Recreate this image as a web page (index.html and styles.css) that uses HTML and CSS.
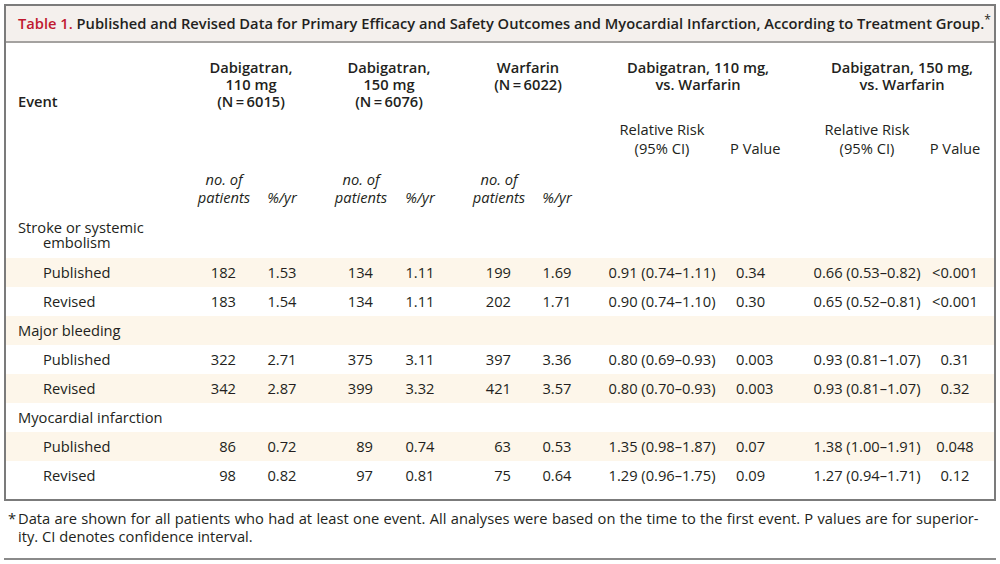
FILE: index.html
```html
<!DOCTYPE html>
<html lang="en">
<head>
<meta charset="utf-8">
<title>Table 1</title>
<link rel="stylesheet" href="styles.css">
</head>
<body>
<div class="page">
  <div class="box">
    <div class="title"><span class="lab">Table 1.</span> Published and Revised Data for Primary Efficacy and Safety Outcomes and Myocardial Infarction, According to Treatment Group.<sup>*</sup></div>
    <table class="data">
      <colgroup>
        <col class="w-ev"><col class="w-n1"><col class="w-p"><col class="w-n"><col class="w-p"><col class="w-n"><col class="w-p6"><col class="w-rr1"><col class="w-pv1"><col class="w-rr2"><col class="w-pv2">
      </colgroup>
      <thead>
        <tr class="r-group">
          <th class="ev">Event</th>
          <th colspan="2" class="g g1">Dabigatran,<br>110 mg<br>(N&#8201;=&#8201;6015)</th>
          <th colspan="2" class="g g2">Dabigatran,<br>150 mg<br>(N&#8201;=&#8201;6076)</th>
          <th colspan="2" class="g g3">Warfarin<br>(N&#8201;=&#8201;6022)</th>
          <th colspan="2" class="g g4">Dabigatran, 110 mg,<br>vs. Warfarin</th>
          <th colspan="2" class="g g5">Dabigatran, 150 mg,<br>vs. Warfarin</th>
        </tr>
        <tr class="r-sub">
          <td></td><td></td><td></td><td></td><td></td><td></td><td></td>
          <th class="rr1">Relative Risk<br>(95% CI)</th>
          <th class="pvh1">P Value</th>
          <th class="rr2">Relative Risk<br>(95% CI)</th>
          <th class="pv2">P Value</th>
        </tr>
        <tr class="r-unit">
          <td></td>
          <th class="nh1"><i>no. of<br>patients</i></th>
          <th class="ph"><i>%/yr</i></th>
          <th class="nh"><i>no. of<br>patients</i></th>
          <th class="ph"><i>%/yr</i></th>
          <th class="nh"><i>no. of<br>patients</i></th>
          <th class="ph"><i>%/yr</i></th>
          <td></td><td></td><td></td><td></td>
        </tr>
      </thead>
      <tbody>
        <tr class="cat first">
          <td class="ev hang">Stroke or systemic<br>embolism</td>
          <td></td><td></td><td></td><td></td><td></td><td></td><td></td><td></td><td></td><td></td>
        </tr>
        <tr class="row band">
          <td class="ev sub">Published</td>
          <td class="n1">182</td><td class="p">1.53</td>
          <td class="n">134</td><td class="p">1.11</td>
          <td class="n">199</td><td class="p">1.69</td>
          <td class="rr1">0.91 (0.74–1.11)</td><td class="pv1">0.34</td>
          <td class="rr2">0.66 (0.53–0.82)</td><td class="pv2">&lt;0.001</td>
        </tr>
        <tr class="row">
          <td class="ev sub">Revised</td>
          <td class="n1">183</td><td class="p">1.54</td>
          <td class="n">134</td><td class="p">1.11</td>
          <td class="n">202</td><td class="p">1.71</td>
          <td class="rr1">0.90 (0.74–1.10)</td><td class="pv1">0.30</td>
          <td class="rr2">0.65 (0.52–0.81)</td><td class="pv2">&lt;0.001</td>
        </tr>
        <tr class="row band">
          <td class="ev">Major bleeding</td>
          <td></td><td></td><td></td><td></td><td></td><td></td><td></td><td></td><td></td><td></td>
        </tr>
        <tr class="row">
          <td class="ev sub">Published</td>
          <td class="n1">322</td><td class="p">2.71</td>
          <td class="n">375</td><td class="p">3.11</td>
          <td class="n">397</td><td class="p">3.36</td>
          <td class="rr1">0.80 (0.69–0.93)</td><td class="pv1">0.003</td>
          <td class="rr2">0.93 (0.81–1.07)</td><td class="pv2">0.31</td>
        </tr>
        <tr class="row band">
          <td class="ev sub">Revised</td>
          <td class="n1">342</td><td class="p">2.87</td>
          <td class="n">399</td><td class="p">3.32</td>
          <td class="n">421</td><td class="p">3.57</td>
          <td class="rr1">0.80 (0.70–0.93)</td><td class="pv1">0.003</td>
          <td class="rr2">0.93 (0.81–1.07)</td><td class="pv2">0.32</td>
        </tr>
        <tr class="row">
          <td class="ev">Myocardial infarction</td>
          <td></td><td></td><td></td><td></td><td></td><td></td><td></td><td></td><td></td><td></td>
        </tr>
        <tr class="row band">
          <td class="ev sub">Published</td>
          <td class="n1">86</td><td class="p">0.72</td>
          <td class="n">89</td><td class="p">0.74</td>
          <td class="n">63</td><td class="p">0.53</td>
          <td class="rr1">1.35 (0.98–1.87)</td><td class="pv1">0.07</td>
          <td class="rr2">1.38 (1.00–1.91)</td><td class="pv2">0.048</td>
        </tr>
        <tr class="row last">
          <td class="ev sub">Revised</td>
          <td class="n1">98</td><td class="p">0.82</td>
          <td class="n">97</td><td class="p">0.81</td>
          <td class="n">75</td><td class="p">0.64</td>
          <td class="rr1">1.29 (0.96–1.75)</td><td class="pv1">0.09</td>
          <td class="rr2">1.27 (0.94–1.71)</td><td class="pv2">0.12</td>
        </tr>
      </tbody>
    </table>
  </div>
  <p class="note"><span class="ast">*</span><span class="l1">Data are shown for all patients who had at least one event. All analyses were based on the time to the first event. P values are for superior-</span><br>ity. CI denotes confidence interval.</p>
  <div class="rule"></div>
</div>
</body>
</html>
```

FILE: styles.css
```css
html, body {
  margin: 0;
  padding: 0;
  background: #ffffff;
}

body {
  font-family: "Open Sans", "Noto Sans", "Liberation Sans", sans-serif;
  font-size: 14.7px;
  color: #231f20;
}

.page {
  width: 992px;
  padding: 4px 4px 0 4px;
}

.box {
  border: 2px solid #7b7b7b;
  background: #ffffff;
  padding-bottom: 9px;
}

.title {
  background: #f4f0ed;
  border-bottom: 2px solid #a4a2a0;
  height: 35px;
  line-height: 35px;
  padding-left: 12px;
  font-weight: 600;
  white-space: nowrap;
}

.title .lab {
  color: #c0182f;
}

.title sup {
  font-size: 12px;
  vertical-align: top;
  line-height: 28px;
  font-weight: 400;
}

.data {
  width: 988px;
  table-layout: fixed;
  border-collapse: separate;
  border-spacing: 0;
}

.w-ev { width: 184px; }
.w-n1 { width: 68px; }
.w-p { width: 48px; }
.w-n { width: 90px; }
.w-p6 { width: 46px; }
.w-rr1 { width: 150px; }
.w-pv1 { width: 80px; }
.w-rr2 { width: 118px; }
.w-pv2 { width: 66px; }

th, td {
  padding: 0;
  font-weight: 400;
  white-space: nowrap;
}

/* header row: group headings */
.r-group th {
  font-weight: 600;
  vertical-align: top;
  line-height: 17px;
  padding-top: 16px;
  text-align: center;
}

.r-group th.ev {
  vertical-align: bottom;
  text-align: left;
  padding-left: 12px;
}

.g1 { padding-left: 6px; }
.g2 { padding-left: 28px; }
.g3 { padding-left: 32px; }
.g4 { padding-left: 6px; }
.g5 { padding-left: 0; }

/* header row: relative risk / p value */
.r-sub th {
  line-height: 19px;
  padding-top: 10px;
  vertical-align: bottom;
}

.r-sub .rr1 { text-align: center; padding-left: 14px; }
.r-sub .pvh1 { text-align: left; }
.r-sub .rr2 { text-align: center; padding-right: 4px; }
.r-sub .pv2 { text-align: center; padding-right: 12px; }

/* header row: units */
.r-unit th {
  line-height: 18px;
  padding-top: 12px;
  vertical-align: bottom;
  text-align: center;
}

.r-unit th.nh { padding-left: 20px; }

/* body */
.cat td {
  line-height: 15.5px;
  padding-top: 13.5px;
  padding-bottom: 7px;
  vertical-align: top;
}

.ev {
  text-align: left;
  padding-left: 12px;
}

.hang {
  padding-left: 37px;
  text-indent: -25px;
}

.row td {
  height: 29px;
  line-height: 28px;
  vertical-align: middle;
}

.band td {
  background: #fdf6ea;
}

.sub { padding-left: 37px; }

.n1 { text-align: right; padding-right: 22px; }
.n { text-align: right; padding-right: 23px; }
.p { text-align: center; }
.rr1 { text-align: center; padding-left: 14px; }
.pv1 { text-align: left; padding-left: 6px; }
.rr2 { text-align: center; padding-right: 4px; }
.pv2 { text-align: center; padding-right: 12px; }

/* footnote */
.note {
  margin: 8px 0 0 0;
  padding-left: 14px;
  line-height: 18px;
  position: relative;
}

.note .l1 {
  word-spacing: 0.5px;
}

.note .ast {
  position: absolute;
  left: 4px;
  top: 0;
}

.rule {
  margin-top: 13px;
  height: 2px;
  background: #8a8a8a;
}
```
